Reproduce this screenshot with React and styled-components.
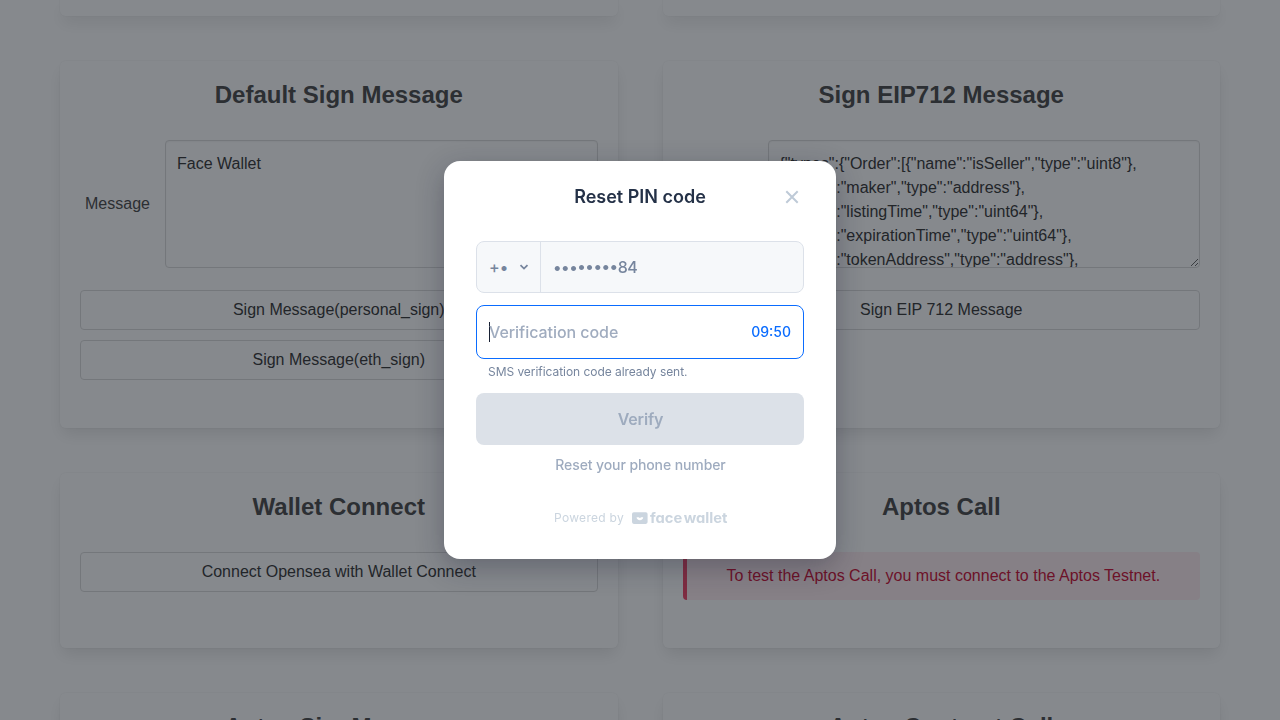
import React from 'react';
import styled, { createGlobalStyle } from 'styled-components';

const GlobalStyle = createGlobalStyle`
  *, *::before, *::after { box-sizing: border-box; }
  html, body { margin: 0; height: 100%; overflow: hidden; background: #fff; }
  body { font-family: "Liberation Sans", Arial, sans-serif; font-size: 16px; line-height: 1.5; color: #4a4a4a; }
  button, textarea, input { font: inherit; margin: 0; }
`;

const Page = styled.main`
  height: 720px;
  overflow: hidden;
  padding: 0 60px;
`;

const Grid = styled.div`
  display: grid;
  grid-template-columns: 1fr 1fr;
  grid-template-rows: 16px 367px 175px 175px;
  gap: 45px;
`;

const Card = styled.section`
  min-width: 0;
  padding: ${(p) => (p.$empty ? 0 : '20px')};
  border-radius: ${(p) => (p.$empty ? '0 0 6px 6px' : '6px')};
  background: #fff;
  box-shadow: 0 8px 16px -2px rgba(10, 10, 10, 0.1), 0 0 0 1px rgba(10, 10, 10, 0.02);
`;

const Title = styled.h2`
  margin: 0 0 32px;
  font-size: 24px;
  line-height: 27px;
  font-weight: 700;
  text-align: center;
`;

const Field = styled.label`
  display: flex;
  align-items: center;
  margin-bottom: 22px;
`;

const FieldLabel = styled.span`
  width: 85px;
  flex: none;
  padding-left: 5px;
`;

const TextArea = styled.textarea`
  display: block;
  flex: 1;
  min-width: 0;
  height: 128px;
  padding: 11px;
  border: 1px solid #dbdbdb;
  border-radius: 4px;
  background: #fff;
  color: #363636;
  line-height: 24px;
  overflow: hidden;
  resize: vertical;
  outline: none;
  box-shadow: inset 0 1px 2px rgba(10, 10, 10, 0.05);
`;

const Button = styled.button`
  display: block;
  width: 100%;
  height: 40px;
  padding: 0 16px;
  border: 1px solid #dbdbdb;
  border-radius: 4px;
  background: #fff;
  color: #363636;
  line-height: 24px;
  & + & { margin-top: 10px; }
`;

const Alert = styled.div`
  height: 48px;
  padding: 12px 16px;
  border-left: 4px solid #f14668;
  border-radius: 4px;
  background: #feecf0;
  color: #cc0f35;
  text-align: center;
  white-space: nowrap;
`;

const Overlay = styled.div`
  position: fixed;
  inset: 0;
  display: flex;
  align-items: center;
  justify-content: center;
  background: rgba(13, 19, 27, 0.5);
  font-family: Inter, sans-serif;
  font-feature-settings: "calt" 1;
`;

const Modal = styled.div`
  width: 392px;
  height: 398px;
  padding: 0 32px;
  display: flex;
  flex-direction: column;
  border-radius: 16px;
  background: #fff;
  box-shadow: 0 8px 28px rgba(25, 28, 50, 0.32);
`;

const Header = styled.header`
  display: grid;
  grid-template-columns: 24px 1fr 24px;
  align-items: center;
  height: 72px;
  margin-bottom: 8px;
`;

const Heading = styled.h1`
  grid-column: 2;
  margin: 0;
  font-size: 18px;
  line-height: 24px;
  font-weight: 600;
  text-align: center;
  color: #243147;
`;

const Close = styled.button`
  display: flex;
  padding: 0;
  border: 0;
  background: none;
  color: #becad7;
`;

const Phone = styled.div`
  display: flex;
  height: 52px;
  border: 1px solid #dce1e9;
  border-radius: 8px;
  background: #f6f8fa;
  color: #76859d;
  font-size: 16px;
  font-weight: 500;
  line-height: 50px;
`;

const Country = styled.div`
  display: flex;
  align-items: center;
  justify-content: space-between;
  width: 64px;
  padding: 0 10px 0 12px;
  border-right: 1px solid #dce1e9;
`;

const Digits = styled.span`
  padding-left: 12px;
  letter-spacing: -0.45px;
`;

const CodeField = styled.div`
  display: flex;
  align-items: center;
  height: 54px;
  margin-top: 12px;
  padding: 0 12px;
  border: 1px solid #0a6cff;
  border-radius: 8px;
`;

const Caret = styled.span`
  width: 1px;
  height: 20px;
  margin-right: -1px;
  background: #172033;
`;

const Placeholder = styled.span`
  flex: 1;
  font-size: 16px;
  font-weight: 500;
  letter-spacing: -0.05px;
  color: #a0acbf;
`;

const Timer = styled.span`
  font-size: 14px;
  line-height: 20px;
  padding-bottom: 1px;
  font-weight: 500;
  color: #0a6cff;
`;

const Hint = styled.p`
  margin: 4px 0 12px;
  padding-left: 12px;
  font-size: 12px;
  line-height: 18px;
  letter-spacing: -0.05px;
  color: #76859d;
`;

const Verify = styled.button`
  height: 52px;
  padding: 0 0 0 1px;
  border: 0;
  border-radius: 8px;
  background: #dce1e8;
  color: #9eabbe;
  font-size: 16px;
  font-weight: 600;
  letter-spacing: -0.15px;
`;

const ResetLink = styled.button`
  align-self: center;
  margin-top: 10px;
  padding: 0 0 0 1px;
  border: 0;
  background: none;
  color: #9eabbf;
  font-size: 14px;
  line-height: 20px;
  font-weight: 500;
  letter-spacing: -0.1px;
`;

const Footer = styled.footer`
  display: flex;
  align-items: center;
  height: 20px;
  margin: 33px 0 0 78px;
  color: #cbd5df;
  font-size: 12px;
  line-height: 20px;
  white-space: nowrap;
`;

const Powered = styled.span`
  width: 78px;
  letter-spacing: 0.3px;
`;

const Wordmark = styled.text`
  font-family: Inter, sans-serif;
  font-size: 14.5px;
  font-weight: 650;
  font-feature-settings: "cv11";
  word-spacing: -2px;
`;

const orderTypes = [
  '{"types":{"Order":[{"name":"isSeller","type":"uint8"},',
  '{"name":"maker","type":"address"},',
  '{"name":"listingTime","type":"uint64"},',
  '{"name":"expirationTime","type":"uint64"},',
  '{"name":"tokenAddress","type":"address"},',
].join('\n');

function CloseIcon() {
  return (
    <svg width="24" height="24" viewBox="0 0 24 24" fill="none" stroke="currentColor" strokeWidth="2">
      <path d="M6.3 6.3l11.4 11.4M17.7 6.3L6.3 17.7" />
    </svg>
  );
}

function Chevron() {
  return (
    <svg width="12" height="12" viewBox="0 0 12 12" fill="none" stroke="currentColor" strokeWidth="1.8">
      <path d="M2.5 4.2L6 7.600l3.500-3.400" />
    </svg>
  );
}

function FaceWalletLogo() {
  return (
    <svg width="104" height="20" viewBox="0 -2 104 20" fill="currentColor">
      <rect x="0" y="2.2" width="15.6" height="11.7" rx="1.8" />
      <path d="M4.6 7.3h1.6c.7 0 .9.6 1.7.6s1-.6 1.7-.6h1.6c0 1.7-1.4 2.9-3.3 2.9S4.6 9 4.6 7.3z" fill="#fff" />
      <Wordmark x="18" y="13" textLength="77.5" lengthAdjust="spacingAndGlyphs">
        face wallet
      </Wordmark>
    </svg>
  );
}

export default function App() {
  return (
    <>
      <GlobalStyle />
      <Page>
        <Grid>
          <Card $empty />
          <Card $empty />
          <Card>
            <Title>Default Sign Message</Title>
            <Field>
              <FieldLabel>Message</FieldLabel>
              <TextArea defaultValue="Face Wallet" spellCheck={false} />
            </Field>
            <Button>Sign Message(personal_sign)</Button>
            <Button>Sign Message(eth_sign)</Button>
          </Card>
          <Card>
            <Title>Sign EIP712 Message</Title>
            <Field>
              <FieldLabel />
              <TextArea defaultValue={orderTypes} spellCheck={false} />
            </Field>
            <Button>Sign EIP 712 Message</Button>
          </Card>
          <Card>
            <Title>Wallet Connect</Title>
            <Button>Connect Opensea with Wallet Connect</Button>
          </Card>
          <Card>
            <Title>Aptos Call</Title>
            <Alert>To test the Aptos Call, you must connect to the Aptos Testnet.</Alert>
          </Card>
          <Card>
            <Title>Aptos SignMessage</Title>
          </Card>
          <Card>
            <Title>Aptos Contract Call</Title>
          </Card>
        </Grid>
      </Page>
      <Overlay>
        <Modal role="dialog" aria-modal="true">
          <Header>
            <Heading>Reset PIN code</Heading>
            <Close aria-label="Close">
              <CloseIcon />
            </Close>
          </Header>
          <Phone>
            <Country>
              <span>+•</span>
              <Chevron />
            </Country>
            <Digits>••••••••84</Digits>
          </Phone>
          <CodeField>
            <Caret />
            <Placeholder>Verification code</Placeholder>
            <Timer>09:50</Timer>
          </CodeField>
          <Hint>SMS verification code already sent.</Hint>
          <Verify>Verify</Verify>
          <ResetLink>Reset your phone number</ResetLink>
          <Footer>
            <Powered>Powered by</Powered>
            <FaceWalletLogo />
          </Footer>
        </Modal>
      </Overlay>
    </>
  );
}
